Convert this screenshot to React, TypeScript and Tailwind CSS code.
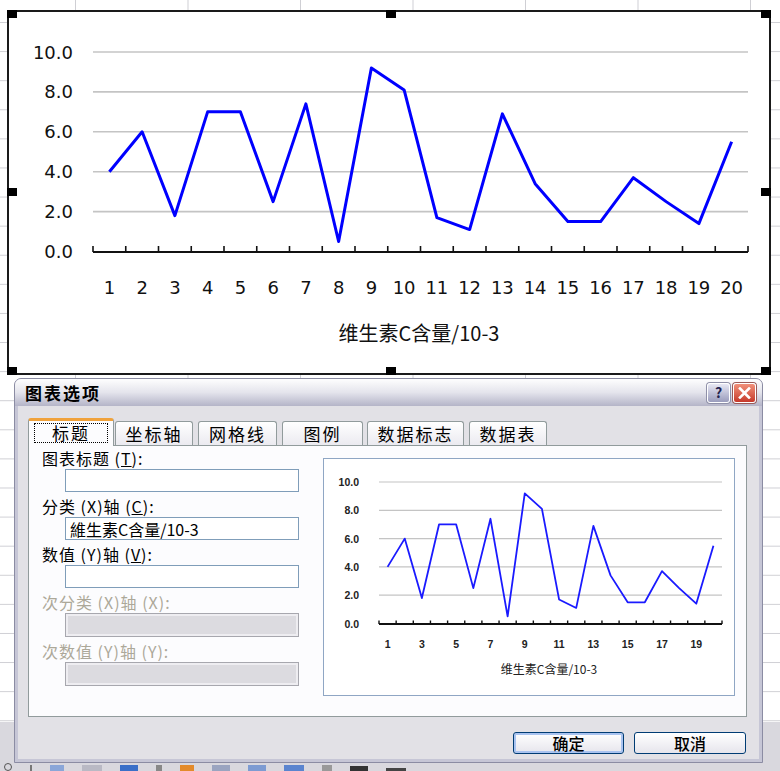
import React from 'react';

const DATA = [4.0, 6.0, 1.8, 7.0, 7.0, 2.5, 7.4, 0.5, 9.2, 8.1, 1.7, 1.1, 6.9, 3.4, 1.5, 1.5, 3.7, 2.5, 1.4, 5.5];
const GRID = [2, 4, 6, 8, 10];

// main chart geometry (page coordinates)
const M = { x0: 93, x1: 748, zero: 251.5, unit: 19.95 };
const mStep = (M.x1 - M.x0) / 20;
const mx = (i: number) => M.x0 + mStep * (i + 0.5);
const my = (v: number) => M.zero - v * M.unit;

// preview chart geometry
const P = { x0: 379, x1: 722, zero: 623.5, unit: 14.15 };
const pStep = (P.x1 - P.x0) / 20;
const px = (i: number) => P.x0 + pStep * (i + 0.5);
const py = (v: number) => P.zero - v * P.unit;

const MainChart = () => (
  <svg className="block h-full w-full font-['DejaVu_Sans',sans-serif]" viewBox="9 12 760 361">
    {GRID.map((g) => (
      <line key={g} x1={M.x0} x2={M.x1} y1={my(g)} y2={my(g)} stroke="#c4c4c4" strokeWidth={1.6} />
    ))}
    <line x1={M.x0} x2={M.x1} y1={252} y2={252} stroke="#111" strokeWidth={2} />
    {Array.from({ length: 21 }, (_, k) => (
      <line key={k} x1={M.x0 + mStep * k} x2={M.x0 + mStep * k} y1={246} y2={252} stroke="#111" strokeWidth={1.6} />
    ))}
    {[0, 2, 4, 6, 8, 10].map((g) => (
      <text key={g} x={73} y={my(g)} textAnchor="end" dominantBaseline="central" fontSize={18} fill="#111">
        {g.toFixed(1)}
      </text>
    ))}
    {DATA.map((_, i) => (
      <text key={i} x={mx(i)} y={287} textAnchor="middle" dominantBaseline="central" fontSize={18} fill="#111">
        {i + 1}
      </text>
    ))}
    <polyline
      points={DATA.map((v, i) => `${mx(i)},${my(v)}`).join(' ')}
      fill="none"
      stroke="#0000ff"
      strokeWidth={3}
      strokeLinejoin="round"
    />
    <text
      x={419}
      y={332}
      textAnchor="middle"
      dominantBaseline="central"
      fontSize={20}
      fill="#111"
      className="font-['Noto_Sans_CJK_SC',sans-serif]"
    >
      维生素C含量/10-3
    </text>
  </svg>
);

const PreviewChart = () => (
  <svg className="block h-full w-full font-['Liberation_Sans',sans-serif]" viewBox="324 459 410 236">
    {GRID.map((g) => (
      <line key={g} x1={P.x0} x2={P.x1} y1={py(g)} y2={py(g)} stroke="#c4c4c4" strokeWidth={1.2} />
    ))}
    <line x1={P.x0} x2={P.x1} y1={624} y2={624} stroke="#111" strokeWidth={1.8} />
    {Array.from({ length: 21 }, (_, k) => (
      <line key={k} x1={P.x0 + pStep * k} x2={P.x0 + pStep * k} y1={620.5} y2={624} stroke="#111" strokeWidth={1.4} />
    ))}
    {[0, 2, 4, 6, 8, 10].map((g) => (
      <text key={g} x={359} y={py(g)} textAnchor="end" dominantBaseline="central" fontSize={10.5} fontWeight={700} fill="#222">
        {g.toFixed(1)}
      </text>
    ))}
    {DATA.map((_, i) =>
      i % 2 === 0 ? (
        <text key={i} x={px(i)} y={644} textAnchor="middle" dominantBaseline="central" fontSize={10.5} fontWeight={700} fill="#222">
          {i + 1}
        </text>
      ) : null
    )}
    <polyline
      points={DATA.map((v, i) => `${px(i)},${py(v)}`).join(' ')}
      fill="none"
      stroke="#1a1aff"
      strokeWidth={1.8}
      strokeLinejoin="round"
    />
    <text
      x={549}
      y={668}
      textAnchor="middle"
      dominantBaseline="central"
      fontSize={12}
      fill="#222"
      className="font-['Noto_Sans_CJK_SC',sans-serif]"
    >
      维生素C含量/10-3
    </text>
  </svg>
);

const Handle = ({ className }: { className: string }) => (
  <div className={`absolute h-[8px] w-[10px] bg-black ${className}`} />
);

const tabs = [
  { label: '坐标轴', cls: 'ml-[1px] w-[78px]' },
  { label: '网格线', cls: 'ml-[5px] w-[79px]' },
  { label: '图例', cls: 'ml-[5px] w-[81px]' },
  { label: '数据标志', cls: 'ml-[4px] w-[97px]' },
  { label: '数据表', cls: 'ml-[5px] w-[78px]' },
];

const Field = ({ label, value, disabled }: { label: React.ReactNode; value?: string; disabled?: boolean }) => (
  <div className="flex flex-col">
    <div className={`h-[22px] text-[16px] leading-[22px] tracking-[1px] ${disabled ? 'text-[#aca899]' : 'text-black'}`}>{label}</div>
    {disabled ? (
      <div className="ml-[23px] h-[24px] w-[234px] border border-[#a7a7ae] bg-[#dcdbe0] shadow-[inset_0_0_0_2px_#eeedf1]" />
    ) : (
      <div className="ml-[23px] flex h-[23px] w-[234px] items-center border border-[#7f9db9] bg-white pl-[4px] text-[16px] text-black">
        {value}
      </div>
    )}
  </div>
);

export default function App() {
  return (
    <div className="relative h-[771px] w-[780px] overflow-hidden bg-white font-['Noto_Sans_CJK_SC',sans-serif]">
      {/* spreadsheet grid behind */}
      <div className="absolute inset-x-0 top-0 h-[722px] bg-[linear-gradient(to_right,#cfcfd4_1px,transparent_1px)] bg-size-[112.5px_100%] bg-position-[75px_0]" />
      <div className="absolute inset-x-0 top-0 h-[722px] bg-[linear-gradient(to_bottom,#cfcfd4_1px,transparent_1px)] bg-size-[100%_29.1px] bg-position-[0_22px]" />
      <div className="absolute inset-x-0 top-[722px] bottom-0 bg-[#d9d8de]">
        <div className="absolute bottom-0 left-0 flex h-[9px] w-full items-end gap-[18px] pl-[4px]">
          <div className="h-[8px] w-[8px] rounded-full border border-[#555]" />
          <div className="h-[6px] w-[2px] bg-[#777]" />
          <div className="h-[6px] w-[14px] bg-[#8aa6d8]" />
          <div className="h-[6px] w-[20px] bg-[#b9b9c4]" />
          <div className="h-[6px] w-[18px] bg-[#3a6fc8]" />
          <div className="h-[6px] w-[6px] bg-[#888]" />
          <div className="h-[6px] w-[14px] bg-[#e38a2a]" />
          <div className="h-[6px] w-[18px] bg-[#9aa4c0]" />
          <div className="h-[6px] w-[18px] bg-[#7d9bd2]" />
          <div className="h-[6px] w-[20px] bg-[#5a84cf]" />
          <div className="h-[6px] w-[10px] bg-[#999]" />
          <div className="h-[5px] w-[18px] bg-[#333]" />
          <div className="h-[3px] w-[20px] bg-[#444]" />
        </div>
      </div>

      {/* chart object */}
      <div className="absolute left-[7px] top-[10px] h-[365px] w-[764px] border-2 border-[#1a1a1a] bg-white">
        <MainChart />
        <Handle className="-left-[2px] -top-[2px]" />
        <Handle className="left-[377px] -top-[2px]" />
        <Handle className="-right-[2px] -top-[2px]" />
        <Handle className="-left-[2px] top-[176px]" />
        <Handle className="-right-[2px] top-[176px]" />
        <Handle className="-bottom-[2px] -left-[2px]" />
        <Handle className="-bottom-[2px] left-[377px]" />
        <Handle className="-bottom-[2px] -right-[2px]" />
      </div>

      {/* dialog */}
      <div className="absolute left-[14px] top-[378px] flex h-[385px] w-[749px] flex-col rounded-t-[7px] border border-[#8b8ca3] bg-[#c6c6d6]">
        <div className="flex h-[27px] shrink-0 items-center justify-between rounded-t-[6px] bg-gradient-to-b from-[#fefefe] via-[#e4e4ec] to-[#b4b4c8] pl-[10px] pr-[6px]">
          <span className="text-[17px] font-bold tracking-[2px] text-black">图表选项</span>
          <div className="flex gap-[3px]">
            <div className="flex h-[20px] w-[23px] items-center justify-center rounded-[3px] border border-white bg-gradient-to-b from-[#e8e8f4] to-[#9a9cbc] text-[14px] font-bold text-[#232350] shadow-[0_0_0_1px_#8f90a8]">
              ?
            </div>
            <div className="flex h-[20px] w-[23px] items-center justify-center rounded-[3px] border border-white bg-gradient-to-b from-[#f0907a] to-[#c6372a] shadow-[0_0_0_1px_#9a5a58]">
              <svg width="13" height="12" viewBox="0 0 13 12">
                <path d="M2 1.5 L11 10.5 M11 1.5 L2 10.5" stroke="#fff" strokeWidth="2.6" strokeLinecap="square" />
              </svg>
            </div>
          </div>
        </div>

        <div className="mx-[3px] mb-[3px] flex flex-1 flex-col bg-[#e2e1e6] pl-[10px] pr-[12px]">
          {/* tabs */}
          <div className="mt-[12px] flex h-[27px] items-end">
            <div className="relative z-10 -mb-[1px] flex h-[28px] w-[86px] rounded-t-[3px] border-x border-t-[3px] border-x-[#919b9c] border-t-[#f0a23c] bg-[#fcfcfe] px-[5px] pb-[3px] pt-[2px]">
              <div className="flex flex-1 items-center justify-center border border-dotted border-black text-[17px] tracking-[2px] text-black">
                标题
              </div>
            </div>
            {tabs.map((t) => (
              <div
                key={t.label}
                className={`flex h-[24px] items-center justify-center rounded-t-[3px] border border-b-0 border-[#919b9c] bg-gradient-to-b from-white to-[#ebeaf0] text-[17px] tracking-[2px] text-black ${t.cls}`}
              >
                {t.label}
              </div>
            ))}
          </div>

          {/* panel */}
          <div className="flex h-[272px] w-[719px] border border-[#919b9c] bg-[#fcfcfe]">
            <div className="flex w-[294px] flex-col gap-[3px] pl-[13px] pt-[1px]">
              <Field label={<>图表标题 (<u>T</u>):</>} value="" />
              <Field label={<>分类 (X)轴 (<u>C</u>):</>} value="維生素C含量/10-3" />
              <Field label={<>数值 (Y)轴 (<u>V</u>):</>} value="" />
              <Field label={<>次分类 (X)轴 (X):</>} disabled />
              <Field label={<>次数值 (Y)轴 (Y):</>} disabled />
            </div>
            <div className="mt-[12px] h-[238px] w-[412px] border border-[#8fa6c4] bg-white">
              <PreviewChart />
            </div>
          </div>

          {/* buttons */}
          <div className="mt-[15px] flex justify-end gap-[10px] pr-[1px]">
            <div className="flex h-[22px] w-[111px] items-center justify-center rounded-[3px] border border-[#003c74] bg-gradient-to-b from-white to-[#e6e5ec] text-[16px] font-medium text-black shadow-[inset_0_0_0_2px_#a9c3f0]">
              确定
            </div>
            <div className="flex h-[22px] w-[112px] items-center justify-center rounded-[3px] border border-[#003c74] bg-gradient-to-b from-white to-[#e6e5ec] text-[16px] font-medium text-black">
              取消
            </div>
          </div>
        </div>
      </div>
    </div>
  );
}
